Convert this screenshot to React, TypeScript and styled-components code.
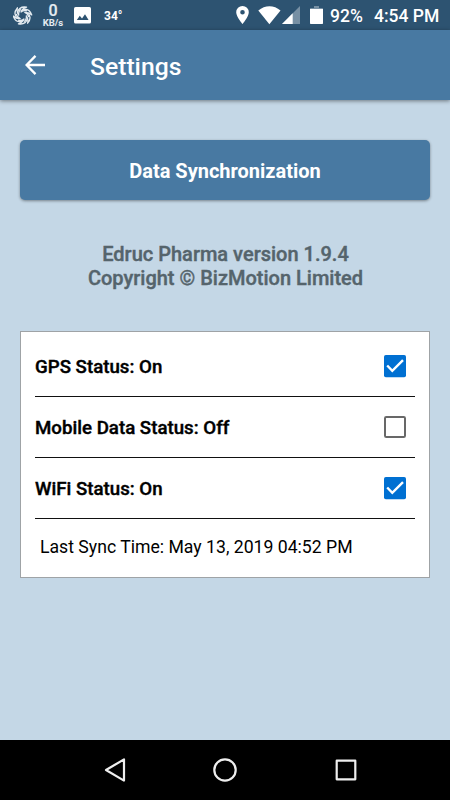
import React from "react";
import styled, { createGlobalStyle } from "styled-components";

const GlobalStyle = createGlobalStyle`
  * { box-sizing: border-box; }
  body { margin: 0; font-family: Roboto, "Liberation Sans", sans-serif; }
`;

const Screen = styled.div`
  width: 450px;
  height: 800px;
  display: flex;
  flex-direction: column;
  background: #c4d7e6;
  overflow: hidden;
`;

const StatusBar = styled.header`
  height: 30px;
  flex: none;
  display: flex;
  padding: 0 11px 0 13px;
  background: #2d5371;
  color: #fff;
`;

const StatusIcon = styled.svg<{ $top: number; $left?: number }>`
  display: block;
  flex: none;
  margin-top: ${(p) => p.$top}px;
  margin-left: ${(p) => p.$left ?? 0}px;
`;

const NetSpeed = styled.div`
  width: 22px;
  margin: 3px 0 0 9px;
  display: flex;
  flex-direction: column;
  align-items: center;
  color: #e4ebf0;
  font-weight: 500;
  white-space: nowrap;
`;

const SpeedValue = styled.span`
  font-size: 16px;
  line-height: 15px;
  -webkit-text-stroke: 0.2px currentColor;
`;

const SpeedUnit = styled.span`
  font-size: 9.5px;
  line-height: 9px;
  font-weight: 700;
`;

const Temperature = styled.span`
  margin-left: 13px;
  font-size: 12px;
  line-height: 32px;
  font-weight: 700;
`;

const Spacer = styled.div`
  flex: 1;
`;

const StatusText = styled.span<{ $width: number; $left: number }>`
  width: ${(p) => p.$width}px;
  margin-left: ${(p) => p.$left}px;
  flex: none;
  font-size: 17.5px;
  line-height: 32px;
  font-weight: 500;
  white-space: nowrap;
`;

const AppBar = styled.div`
  height: 70px;
  flex: none;
  display: flex;
  align-items: center;
  padding: 0 25px;
  background: #4879a2;
  color: #fff;
  box-shadow: 0 1px 4px rgba(0, 0, 0, 0.45);
`;

const BackButton = styled.button`
  display: flex;
  width: 65px;
  padding: 0;
  border: 0;
  background: none;
  color: inherit;
`;

const Title = styled.h1`
  margin: 3px 0 0;
  font-size: 24.7px;
  line-height: 30px;
  font-weight: 500;
`;

const Content = styled.main`
  flex: 1;
  display: flex;
  flex-direction: column;
  padding: 40px 20px 0;
`;

const SyncButton = styled.button`
  height: 60px;
  padding: 2px 0 0;
  border: 0;
  border-radius: 5px;
  background: #4879a2;
  box-shadow: 0 1px 3px rgba(0, 0, 0, 0.4);
  color: #fff;
  font-family: inherit;
  font-size: 20px;
  font-weight: 700;
`;

const About = styled.p`
  margin: 42px 0 0 1px;
  color: #55646c;
  text-align: center;
  font-size: 20px;
  line-height: 24px;
  font-weight: 500;
  -webkit-text-stroke: 0.4px currentColor;
`;

const Card = styled.section`
  height: 247px;
  margin-top: 41px;
  padding: 4px 14px 0;
  display: flex;
  flex-direction: column;
  border: 1px solid #9fa3a6;
  background: #fff;
  color: #000;
`;

const Row = styled.label`
  height: 61px;
  display: flex;
  align-items: center;
  justify-content: space-between;
  padding-right: 8px;
  border-bottom: 1px solid #111;
`;

const RowLabel = styled.span`
  padding-top: 2px;
  font-size: 18.7px;
  font-weight: 500;
  -webkit-text-stroke: 0.4px currentColor;
`;

const LastSync = styled.p`
  margin: 17px 0 0 5px;
  font-size: 17.65px;
  line-height: 23px;
`;

const CheckMark = styled.svg`
  display: block;
`;

const NavBar = styled.nav`
  height: 60px;
  flex: none;
  display: grid;
  grid-template-columns: 110px 121px 24px;
  align-items: center;
  padding-left: 103px;
  background: #000;
`;

const NavIcon = styled.svg`
  display: block;
  fill: none;
  stroke: #eee;
  stroke-width: 2.2;
  stroke-linejoin: round;
`;

function Checkbox({ checked }: { checked: boolean }) {
  return (
    <CheckMark width="24" height="24" viewBox="0 0 24 24" role="checkbox" aria-checked={checked}>
      {checked ? (
        <>
          <rect x="1" y="1" width="22" height="22.2" rx="1.8" fill="#0070d2" />
          <path d="M4.2 11.5 9.3 16.8 20 6.2" fill="none" stroke="#fff" strokeWidth="2.4" />
        </>
      ) : (
        <rect x="2" y="2" width="20" height="20" rx="1.3" fill="#fff" stroke="#686868" strokeWidth="2" />
      )}
    </CheckMark>
  );
}

const statuses = [
  { label: "GPS Status: On", on: true },
  { label: "Mobile Data Status: Off", on: false },
  { label: "WiFi Status: On", on: true },
];

const petals = [0, 60, 120, 180, 240, 300];

export default function App() {
  return (
    <>
      <GlobalStyle />
      <Screen>
        <StatusBar>
          <StatusIcon $top={6} width="20" height="19" viewBox="0 0 20 19">
            {petals.map((angle) => (
              <path
                key={angle}
                d="M4.5 6.2C5.6 2.6 9 .4 13.6 1.2C11.2 2 9 3.2 8 6C9.6 4.6 11.8 4.2 14 4.8"
                transform={`rotate(${angle} 9.5 9.5)`}
                fill="none"
                stroke="#e4ebf0"
                strokeWidth="1.3"
                strokeLinejoin="round"
              />
            ))}
          </StatusIcon>
          <NetSpeed>
            <SpeedValue>0</SpeedValue>
            <SpeedUnit>KB/s</SpeedUnit>
          </NetSpeed>
          <StatusIcon $top={7} $left={10} width="17" height="17" viewBox="0 0 17 17">
            <rect width="17" height="16.5" rx="1.6" fill="#fff" />
            <path d="M2.8 13 5.8 8.7 8 11.4 11 7.2 14.6 13Z" fill="#2d5371" />
          </StatusIcon>
          <Temperature>34°</Temperature>
          <Spacer />
          <StatusIcon $top={6} width="13" height="18" viewBox="0 0 13 18">
            <path
              d="M6.5 0A6.3 6.3 0 0 0 .2 6.3C.2 11 6.5 18 6.5 18S12.8 11 12.8 6.3A6.3 6.3 0 0 0 6.5 0Zm0 4a2.3 2.3 0 1 1 0 4.6 2.3 2.3 0 0 1 0-4.6Z"
              fill="#fff"
              fillRule="evenodd"
            />
          </StatusIcon>
          <StatusIcon $top={6} $left={9} width="23" height="19" viewBox="0 0 23 19">
            <path d="M.3 4.5C7-1.2 16-1.2 22.5 4.5L11.4 18.3Z" fill="#fff" />
          </StatusIcon>
          <StatusIcon $top={6} $left={1} width="18" height="18" viewBox="0 0 18 18">
            <path d="M0 18 18 0V18Z" fill="#7790a4" />
            <path d="M0 18 10.7 7.3V18Z" fill="#fff" />
          </StatusIcon>
          <StatusIcon $top={6} $left={10} width="13" height="18" viewBox="0 0 13 18">
            <path d="M4 0h5v2h3.3q.7 0 .7.7V5H0V2.7Q0 2 .7 2H4Z" fill="#7790a4" />
            <path d="M0 3h13v14.3q0 .7-.7.7H.7Q0 18 0 17.3Z" fill="#fff" />
          </StatusIcon>
          <StatusText $width={34} $left={7}>92%</StatusText>
          <StatusText $width={65} $left={10}>4:54 PM</StatusText>
        </StatusBar>

        <AppBar>
          <BackButton aria-label="Back">
            <svg width="20" height="20" viewBox="0 0 20 20" fill="none" stroke="#fff" strokeWidth="2.3">
              <path d="M20 10H2M10.5 .9 1.6 10 10.5 19.1" />
            </svg>
          </BackButton>
          <Title>Settings</Title>
        </AppBar>

        <Content>
          <SyncButton>Data Synchronization</SyncButton>
          <About>
            Edruc Pharma version 1.9.4
            <br />
            Copyright © BizMotion Limited
          </About>
          <Card>
            {statuses.map((status) => (
              <Row key={status.label}>
                <RowLabel>{status.label}</RowLabel>
                <Checkbox checked={status.on} />
              </Row>
            ))}
            <LastSync>Last Sync Time: May 13, 2019 04:52 PM</LastSync>
          </Card>
        </Content>

        <NavBar>
          <NavIcon width="24" height="24" viewBox="0 0 24 24">
            <path d="M3 12 21 1.4V22.6Z" />
          </NavIcon>
          <NavIcon width="24" height="24" viewBox="0 0 24 24">
            <circle cx="12" cy="12" r="10.7" />
          </NavIcon>
          <NavIcon width="24" height="24" viewBox="0 0 24 24">
            <rect x="2.7" y="2.7" width="18.6" height="18.6" />
          </NavIcon>
        </NavBar>
      </Screen>
    </>
  );
}
